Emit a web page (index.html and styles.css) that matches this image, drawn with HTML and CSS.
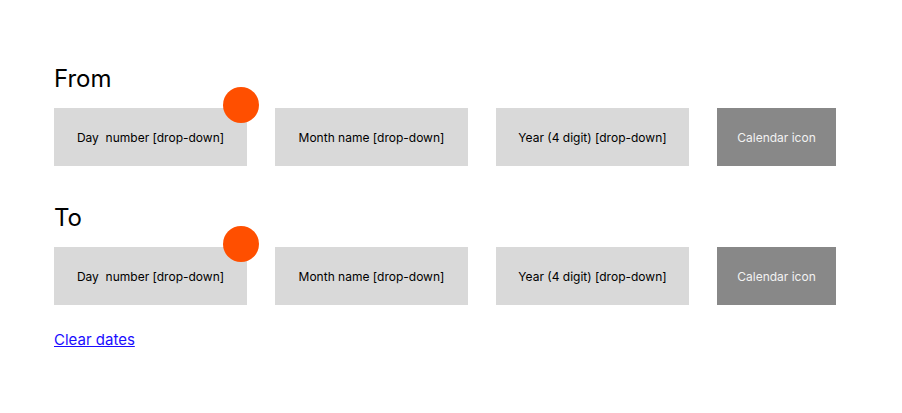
FILE: index.html
```html
<!DOCTYPE html>
<html>
<head>
<meta charset="utf-8">
<link rel="stylesheet" href="styles.css">
</head>
<body>
<div class="page">
  <section class="group">
    <h2 class="label">From</h2>
    <div class="row">
      <div class="field day">Day&nbsp; number [drop-down]<span class="dot"></span></div>
      <div class="field">Month name [drop-down]</div>
      <div class="field">Year (4 digit) [drop-down]</div>
      <div class="field cal">Calendar icon</div>
    </div>
  </section>
  <section class="group">
    <h2 class="label">To</h2>
    <div class="row">
      <div class="field day">Day&nbsp; number [drop-down]<span class="dot"></span></div>
      <div class="field">Month name [drop-down]</div>
      <div class="field">Year (4 digit) [drop-down]</div>
      <div class="field cal">Calendar icon</div>
    </div>
  </section>
  <a class="clear" href="#">Clear dates</a>
</div>
</body>
</html>
```
FILE: styles.css
```css
html, body {
  margin: 0;
  padding: 0;
  background: #fff;
}
body {
  font-family: Inter, "Liberation Sans", sans-serif;
  color: #000;
}
.page {
  padding: 64px 0 0 54px;
  display: flex;
  flex-direction: column;
  align-items: flex-start;
}
.group {
  margin-bottom: 37px;
}
.group + .group {
  margin-bottom: 25px;
}
.label {
  margin: 0 0 15px 0;
  font-size: 24px;
  font-weight: 400;
  line-height: 29px;
}
.row {
  display: flex;
  gap: 28px;
}
.field {
  position: relative;
  width: 193px;
  height: 58px;
  background: #d9d9d9;
  display: flex;
  align-items: center;
  justify-content: center;
  font-size: 12px;
  color: #000;
}
.field.cal {
  width: 119px;
  background: #888888;
  color: #f2f2f2;
}
.dot {
  position: absolute;
  top: -21px;
  right: -12px;
  width: 36px;
  height: 36px;
  border-radius: 50%;
  background: #ff4f00;
}
.clear {
  font-size: 15px;
  line-height: 19px;
  color: #1a0dff;
  text-decoration: underline;
}
```
